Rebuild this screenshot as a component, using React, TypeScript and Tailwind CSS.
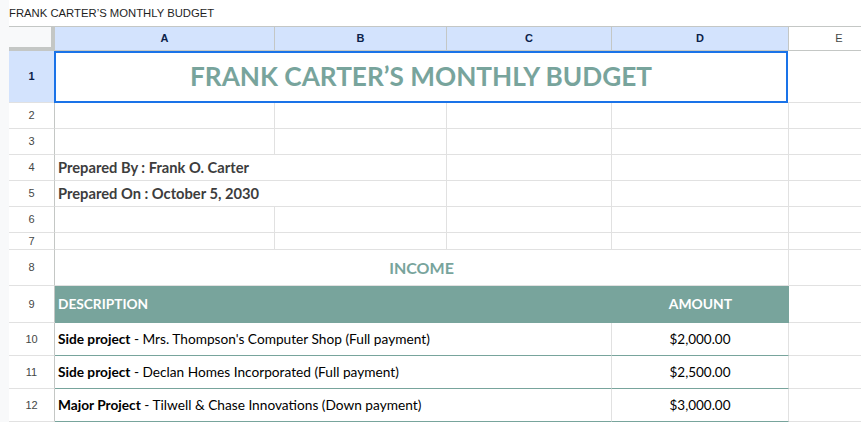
import React from "react";

const TEAL = "#78a49c";
const cellFont = { fontFamily: "Lato, 'Open Sans', sans-serif" };

type Cell = { w: string; line?: boolean; children?: React.ReactNode; cls?: string };

function RowHead({ n, h, active }: { n: number; h: string; active?: boolean }) {
  return (
    <div
      className={`${h} w-[46px] shrink-0 flex items-center justify-center border-r border-r-[#c4c7c5] border-b border-b-[#e1e1e1] text-[11px] ${
        active ? "bg-[#d3e3fd] font-bold text-[#0b1f4a]" : "bg-white text-[#444746]"
      }`}
      style={{ fontFamily: "'Liberation Sans', Arial, sans-serif" }}
    >
      {n}
    </div>
  );
}

function Row({ n, h, cells, active }: { n: number; h: string; cells: Cell[]; active?: boolean }) {
  return (
    <div className="flex">
      <RowHead n={n} h={h} active={active} />
      {cells.map((c, i) => (
        <div
          key={i}
          className={`${h} ${c.w} shrink-0 flex items-center border-b border-b-[#e1e1e1] ${
            c.line === false ? "" : "border-r border-r-[#e1e1e1]"
          } ${c.cls ?? ""}`}
        >
          {c.children}
        </div>
      ))}
    </div>
  );
}

const blankCells: Cell[] = [
  { w: "w-[220px]" },
  { w: "w-[172px]" },
  { w: "w-[165px]" },
  { w: "w-[177px]" },
  { w: "w-[100px]", line: false },
];

function DataRow({ n, strong, rest, amount }: { n: number; strong: string; rest: string; amount: string }) {
  return (
    <div className="flex">
      <RowHead n={n} h="h-[33px]" />
      <div
        className="h-[33px] w-[557px] shrink-0 flex items-center pl-[3px] border-b border-b-[#78a49c] border-r border-r-[#e1e1e1] text-[13.7px] text-black"
        style={cellFont}
      >
        <span className="font-bold">{strong}</span>
        <span>&nbsp;- {rest}</span>
      </div>
      <div
        className="h-[33px] w-[177px] shrink-0 flex items-center justify-center border-b border-b-[#78a49c] border-r border-r-[#e1e1e1] text-[13.5px] text-black"
        style={cellFont}
      >
        {amount}
      </div>
      <div className="h-[33px] w-[100px] shrink-0 border-b border-b-[#e1e1e1]" />
    </div>
  );
}

export default function App() {
  return (
    <div className="w-[861px] h-[422px] overflow-hidden bg-white flex">
      <div className="w-[9px] shrink-0 bg-[#f8f9fa]" />
      <div className="w-[880px] shrink-0 flex flex-col">
        {/* sheet name bar */}
        <div
          className="h-[26px] flex items-center text-[11.3px] text-[#1f1f1f]"
          style={{ fontFamily: "'Liberation Sans', Arial, sans-serif" }}
        >
          FRANK CARTER’S MONTHLY BUDGET
        </div>

        {/* column headers */}
        <div
          className="flex h-[25px] border-t border-t-[#c4c7c5] text-[11px] text-[#1f1f1f]"
          style={{ fontFamily: "'Liberation Sans', Arial, sans-serif" }}
        >
          <div className="w-[46px] shrink-0 bg-[#f8f9fa] border-r-[4px] border-r-[#c4c7c5] border-b-[4px] border-b-[#c4c7c5]" />
          {[
            ["A", "w-[220px]"],
            ["B", "w-[172px]"],
            ["C", "w-[165px]"],
            ["D", "w-[177px]"],
          ].map(([l, w]) => (
            <div
              key={l}
              className={`${w} shrink-0 bg-[#d3e3fd] flex items-center justify-center font-bold text-[#0b1f4a] border-r border-r-[#c4c7c5] border-b border-b-[#c4c7c5]`}
            >
              {l}
            </div>
          ))}
          <div className="w-[100px] shrink-0 bg-white flex items-center justify-center text-[#444746] border-b border-b-[#c4c7c5]">
            E
          </div>
        </div>

        {/* row 1: merged title, selected */}
        <div className="flex">
          <RowHead n={1} h="h-[52px]" active />
          <div
            className="h-[52px] w-[734px] shrink-0 flex items-center justify-center border-2 border-[#1a73e8] -ml-[1px] text-[26.2px] font-bold"
            style={{ ...cellFont, color: TEAL }}
          >
            FRANK CARTER’S MONTHLY BUDGET
          </div>
          <div className="h-[52px] w-[101px] shrink-0 border-b border-b-[#e1e1e1]" />
        </div>

        <Row n={2} h="h-[26px]" cells={blankCells} />
        <Row n={3} h="h-[26px]" cells={blankCells} />
        <Row
          n={4}
          h="h-[26px]"
          cells={[
            {
              w: "w-[392px]",
              cls: "pl-[3px] text-[14.7px] font-bold text-[#3d3d3d]",
              children: <span style={cellFont}>Prepared By : Frank O. Carter</span>,
            },
            { w: "w-[165px]" },
            { w: "w-[177px]" },
            { w: "w-[100px]", line: false },
          ]}
        />
        <Row
          n={5}
          h="h-[26px]"
          cells={[
            {
              w: "w-[392px]",
              cls: "pl-[3px] text-[14.7px] font-bold text-[#3d3d3d]",
              children: <span style={cellFont}>Prepared On : October 5, 2030</span>,
            },
            { w: "w-[165px]" },
            { w: "w-[177px]" },
            { w: "w-[100px]", line: false },
          ]}
        />
        <Row n={6} h="h-[26px]" cells={blankCells} />
        <Row n={7} h="h-[17px]" cells={blankCells} />
        <Row
          n={8}
          h="h-[36px]"
          cells={[
            {
              w: "w-[734px]",
              cls: "justify-center text-[16px] font-bold",
              children: <span style={{ ...cellFont, color: TEAL }}>INCOME</span>,
            },
            { w: "w-[100px]", line: false },
          ]}
        />

        {/* row 9: table header */}
        <div className="flex">
          <RowHead n={9} h="h-[37px]" />
          <div
            className="h-[37px] w-[557px] shrink-0 flex items-center pl-[3px] bg-[#78a49c] text-white font-bold text-[13.7px] border-b border-b-[#78a49c]"
            style={cellFont}
          >
            DESCRIPTION
          </div>
          <div
            className="h-[37px] w-[177px] shrink-0 flex items-center justify-center bg-[#78a49c] text-white font-bold text-[13.9px] border-b border-b-[#78a49c]"
            style={cellFont}
          >
            AMOUNT
          </div>
          <div className="h-[37px] w-[100px] shrink-0 border-b border-b-[#e1e1e1]" />
        </div>

        <DataRow n={10} strong="Side project" rest="Mrs. Thompson's Computer Shop (Full payment)" amount="$2,000.00" />
        <DataRow n={11} strong="Side project" rest="Declan Homes Incorporated (Full payment)" amount="$2,500.00" />
        <DataRow n={12} strong="Major Project" rest="Tilwell & Chase Innovations (Down payment)" amount="$3,000.00" />
        <div className="flex flex-1">
          <div className="w-[46px] shrink-0 border-r border-r-[#c4c7c5]" />
        </div>
      </div>
    </div>
  );
}
